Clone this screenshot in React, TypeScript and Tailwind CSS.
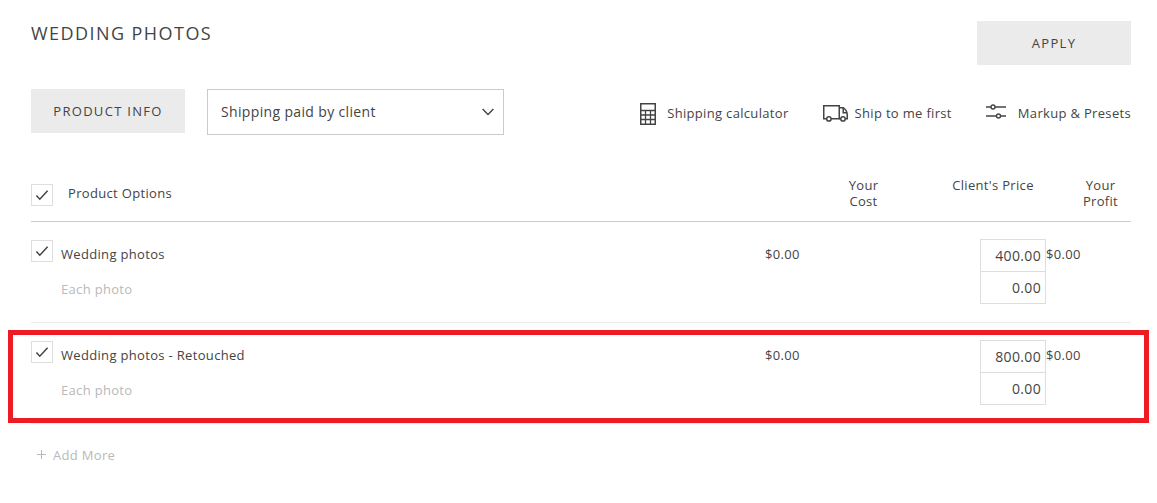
import { useState } from "react";
import type { InputHTMLAttributes, ReactNode } from "react";

interface ProductOption {
  id: string;
  name: string;
  unit: string;
  cost: string;
  price: string;
  extra: string;
  profit: string;
  highlighted?: boolean;
}

const OPTIONS: ProductOption[] = [
  {
    id: "wedding",
    name: "Wedding photos",
    unit: "Each photo",
    cost: "$0.00",
    price: "400.00",
    extra: "0.00",
    profit: "$0.00",
  },
  {
    id: "retouched",
    name: "Wedding photos - Retouched",
    unit: "Each photo",
    cost: "$0.00",
    price: "800.00",
    extra: "0.00",
    profit: "$0.00",
    highlighted: true,
  },
];

function CalculatorIcon() {
  return (
    <svg width="16" height="24" viewBox="0 -2 16 24" fill="none" stroke="currentColor" aria-hidden="true">
      <rect x="0.75" y="0.75" width="14.5" height="20.5" strokeWidth="1.5" />
      <path d="M0 7.5h16M0 12h16M0 16.5h16M5.5 7.5v14M10.5 7.5v14" strokeWidth="1.3" />
    </svg>
  );
}

function TruckIcon() {
  return (
    <svg width="26" height="18" viewBox="0 0 26 18" fill="none" stroke="currentColor" strokeWidth="1.5" aria-hidden="true">
      <path d="M3.6 14.75H0.75V1.75h15.5v13H8.2" />
      <path d="M16.25 3.75h4.2c2.2 1.8 3.8 4.2 3.8 7v4h-2M20.2 3.75v5h3.6M16.25 14.75h1.4" />
      <circle cx="5.9" cy="14.9" r="2.2" />
      <circle cx="20" cy="14.9" r="2.2" />
    </svg>
  );
}

function SlidersIcon() {
  return (
    <svg width="20" height="18" viewBox="0 0 20 18" fill="none" stroke="currentColor" strokeWidth="1.4" aria-hidden="true">
      <path d="M0 3h5M9 3h11M0 12h10.5M14.5 12H20" />
      <circle cx="7" cy="3" r="2" />
      <circle cx="12.5" cy="12" r="2" />
    </svg>
  );
}

function CheckBox(props: InputHTMLAttributes<HTMLInputElement>) {
  return (
    <span className="inline-grid shrink-0 place-items-center self-start">
      <input
        type="checkbox"
        {...props}
        className="peer col-start-1 row-start-1 size-[22px] appearance-none border border-[#dedede] bg-white"
      />
      <svg
        width="14"
        height="12"
        viewBox="0 0 14 12"
        fill="none"
        stroke="currentColor"
        strokeWidth="1.5"
        className="pointer-events-none invisible col-start-1 row-start-1 peer-checked:visible"
        aria-hidden="true"
      >
        <path d="M1.4 6.6l3.4 3.6L12.6 1.8" />
      </svg>
    </span>
  );
}

function ToolButton({ icon, gap, children }: { icon: ReactNode; gap: string; children: ReactNode }) {
  return (
    <button type="button" className={`flex items-center tracking-wide ${gap}`}>
      {icon}
      {children}
    </button>
  );
}

function OptionRow({ option }: { option: ProductOption }) {
  const [checked, setChecked] = useState(true);
  const [price, setPrice] = useState(option.price);
  const [extra, setExtra] = useState(option.extra);
  const inputClass = "h-[33px] w-full border border-[#dedede] px-1 text-right text-sm tracking-wide outline-none";

  return (
    <tr className="relative align-top">
      <td className="h-[101px] border-b border-[#ebebeb] pt-[18px]">
        <div className="flex gap-2">
          <CheckBox id={option.id} checked={checked} onChange={(e) => setChecked(e.target.checked)} />
          <div className="pt-1.5">
            <label htmlFor={option.id} className="block">
              {option.name}
            </label>
            <p className="mt-[19px] text-[#b9b9b9]">{option.unit}</p>
          </div>
        </div>
        {option.highlighted && (
          <div className="pointer-events-none absolute -left-[23px] -right-[18px] bottom-px top-[7px] border-5 border-[#ed1c24]" />
        )}
      </td>
      <td className="border-b border-[#ebebeb] pt-6">{option.cost}</td>
      <td className="border-b border-[#ebebeb] pt-[17px]">
        <div className="ml-auto flex w-[66px] flex-col -space-y-px">
          <input
            aria-label={`${option.name} price`}
            value={price}
            onChange={(e) => setPrice(e.target.value)}
            className={inputClass}
          />
          <input
            aria-label={`${option.name} extra price`}
            value={extra}
            onChange={(e) => setExtra(e.target.value)}
            className={inputClass}
          />
        </div>
      </td>
      <td className="border-b border-[#ebebeb] pt-6">{option.profit}</td>
    </tr>
  );
}

export default function App() {
  const [allChecked, setAllChecked] = useState(true);

  return (
    <main className="bg-white pb-10 pl-[31px] pr-[26px] pt-[21px] font-['Open_Sans',sans-serif] text-[13px] leading-4 text-[#444]">
      <header className="flex items-start justify-between">
        <h1 className="text-lg leading-6 tracking-[0.08em]">WEDDING PHOTOS</h1>
        <button type="button" className="h-11 w-[154px] bg-[#ebebeb] tracking-widest">
          APPLY
        </button>
      </header>

      <div className="mt-6 flex items-start justify-between">
        <div className="flex items-start gap-[22px]">
          <button type="button" className="h-11 w-[154px] bg-[#ebebeb] tracking-widest">
            PRODUCT INFO
          </button>
          <div className="grid w-[297px] items-center">
            <select
              aria-label="Shipping"
              className="col-start-1 row-start-1 h-[46px] w-full appearance-none border border-[#cbcbcb] bg-white px-[13px] text-sm tracking-wide"
            >
              <option>Shipping paid by client</option>
              <option>Shipping paid by me</option>
            </select>
            <svg
              width="12"
              height="8"
              viewBox="0 0 12 8"
              fill="none"
              stroke="currentColor"
              strokeWidth="1.4"
              className="pointer-events-none col-start-1 row-start-1 mr-2.5 justify-self-end"
              aria-hidden="true"
            >
              <path d="M0.6 1L6 6.6L11.4 1" />
            </svg>
          </div>
        </div>

        <div className="flex h-12 items-center gap-[34px]">
          <ToolButton icon={<CalculatorIcon />} gap="gap-[11px]">
            Shipping calculator
          </ToolButton>
          <ToolButton icon={<TruckIcon />} gap="gap-1.5">
            Ship to me first
          </ToolButton>
          <ToolButton icon={<SlidersIcon />} gap="gap-3">
            Markup &amp; Presets
          </ToolButton>
        </div>
      </div>

      <table className="mt-10 w-full table-fixed border-separate border-spacing-0 text-left tracking-wide">
        <colgroup>
          <col />
          <col className="w-[175px]" />
          <col className="w-[106px]" />
          <col className="w-[85px]" />
        </colgroup>
        <thead>
          <tr className="align-top">
            <th className="h-[45px] border-b border-[#cbcbcb] pt-[7px] font-normal">
              <div className="flex gap-[15px]">
                <CheckBox id="all" checked={allChecked} onChange={(e) => setAllChecked(e.target.checked)} />
                <label htmlFor="all" className="pt-px">
                  Product Options
                </label>
              </div>
            </th>
            <th className="border-b border-[#cbcbcb] pl-[22px] text-center font-normal">
              Your
              <br />
              Cost
            </th>
            <th className="border-b border-[#cbcbcb] text-center font-normal">Client's Price</th>
            <th className="border-b border-[#cbcbcb] pl-6 text-center font-normal">
              Your
              <br />
              Profit
            </th>
          </tr>
        </thead>
        <tbody>
          {OPTIONS.map((option) => (
            <OptionRow key={option.id} option={option} />
          ))}
        </tbody>
      </table>

      <button type="button" className="ml-1.5 mt-[23px] flex items-center gap-[7px] tracking-wide text-[#b9b9b9]">
        <svg width="9" height="11" viewBox="0 0 9 11" stroke="currentColor" aria-hidden="true">
          <path d="M4.5 0v9M0 4.5h9" />
        </svg>
        Add More
      </button>
    </main>
  );
}
